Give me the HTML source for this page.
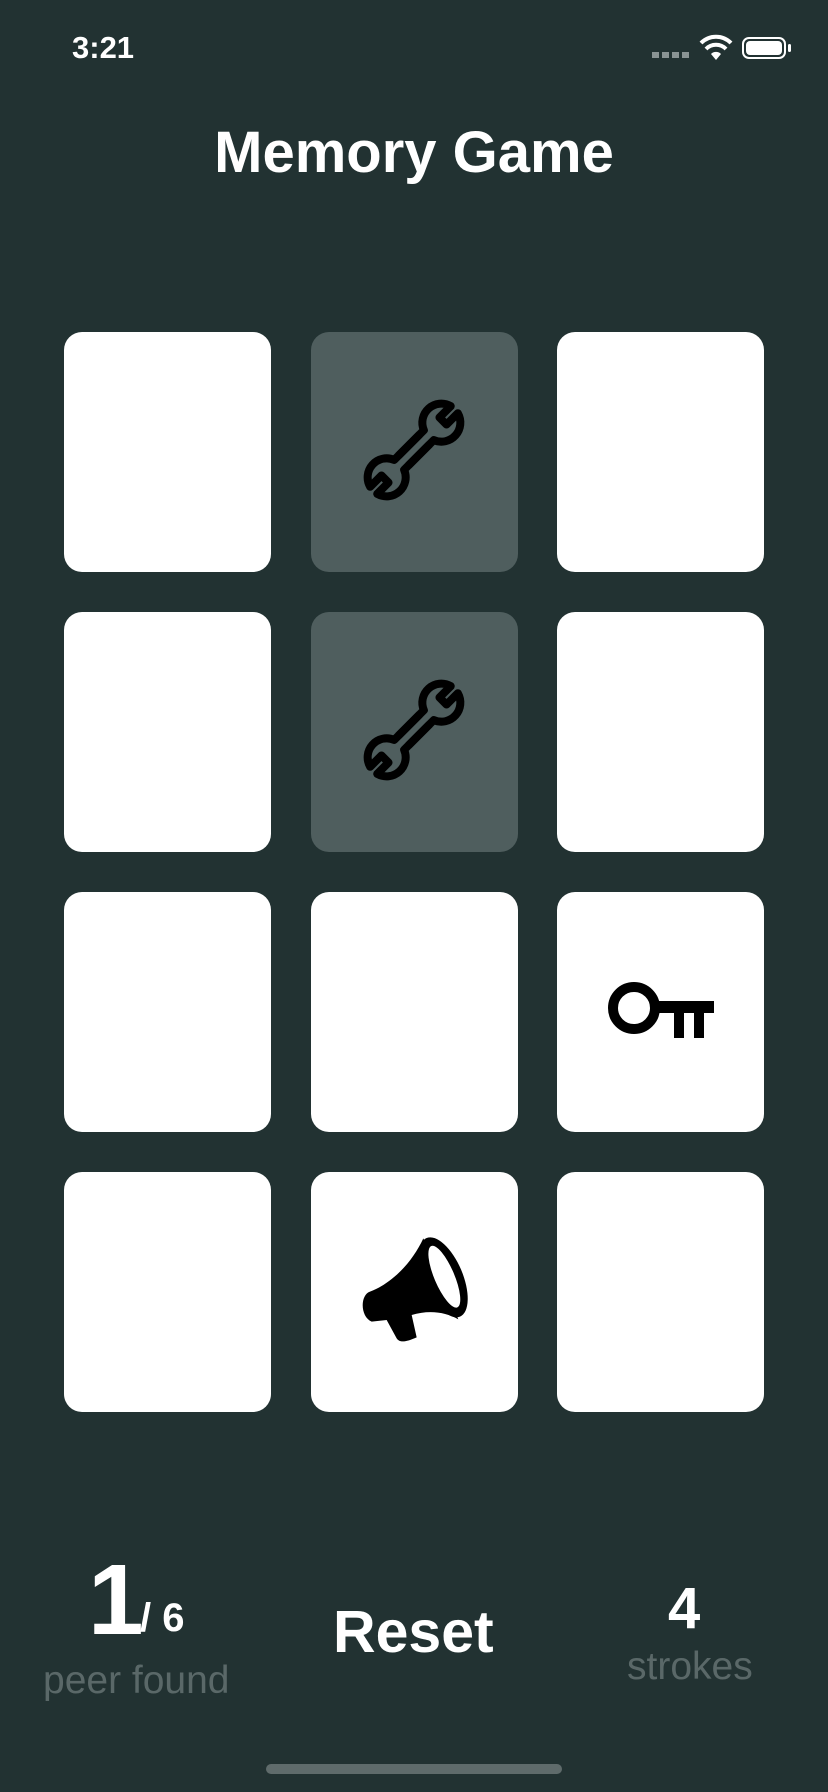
<!DOCTYPE html>
<html><head><meta charset="utf-8"><style>
html,body{margin:0;padding:0}
body{width:828px;height:1792px;background:#223232;position:relative;overflow:hidden;font-family:"Liberation Sans",sans-serif;color:#fff}
.c{position:absolute;width:207px;height:240px;border-radius:18px;background:#fff}
.f{background:#4f5e5e}
.t{position:absolute;white-space:nowrap}
svg{position:absolute;overflow:visible}
</style></head><body>
<div class="t" style="left:72px;top:30px;font-size:31px;font-weight:bold">3:21</div>
<div class="t" style="left:652px;top:52px;width:38px;height:6px;background:repeating-linear-gradient(90deg,#8a9494 0 7px,transparent 7px 10px)"></div>
<svg style="left:700px;top:36px" width="32" height="26" viewBox="0 0 32 26"><path d="M16 24 L11 18 A7 7 0 0 1 21 18Z" fill="#fff"/><path d="M6 13 A14 14 0 0 1 26 13" stroke="#fff" stroke-width="4" fill="none"/><path d="M1 7 A21 21 0 0 1 31 7" stroke="#fff" stroke-width="4" fill="none"/></svg>
<div class="t" style="left:742px;top:37px;width:44px;height:22px;border:2px solid #fff;border-radius:7px;box-sizing:border-box"><div style="position:absolute;left:2px;top:2px;right:2px;bottom:2px;background:#fff;border-radius:4px"></div></div>
<div class="t" style="left:788px;top:44px;width:3px;height:8px;background:#fff;border-radius:2px"></div>
<div class="t" style="left:0;width:828px;text-align:center;top:119px;font-size:58px;font-weight:bold">Memory Game</div>

<div class="c" style="left:64px;top:332px"></div>
<div class="c f" style="left:311px;top:332px"></div>
<div class="c" style="left:557px;top:332px"></div>
<div class="c" style="left:64px;top:612px"></div>
<div class="c f" style="left:311px;top:612px"></div>
<div class="c" style="left:557px;top:612px"></div>
<div class="c" style="left:64px;top:892px"></div>
<div class="c" style="left:311px;top:892px"></div>
<div class="c" style="left:557px;top:892px"></div>
<div class="c" style="left:64px;top:1172px"></div>
<div class="c" style="left:311px;top:1172px"></div>
<div class="c" style="left:557px;top:1172px"></div>

<svg style="left:361px;top:397px" width="106" height="106" viewBox="0 0 106 106"><g transform="rotate(-45 53 53)" fill="none" stroke="#000" stroke-width="8" stroke-linejoin="round"><path d="M38 46 L74 46 A19 19 0 0 1 110 48 L94 48 L94 58 L110 58 A19 19 0 0 1 74 60 L38 60"/><path d="M68 60 L32 60 A19 19 0 0 1 -4 58 L12 58 L12 48 L-4 48 A19 19 0 0 1 32 46 L68 46"/></g></svg>
<svg style="left:361px;top:677px" width="106" height="106" viewBox="0 0 106 106"><g transform="rotate(-45 53 53)" fill="none" stroke="#000" stroke-width="8" stroke-linejoin="round"><path d="M38 46 L74 46 A19 19 0 0 1 110 48 L94 48 L94 58 L110 58 A19 19 0 0 1 74 60 L38 60"/><path d="M68 60 L32 60 A19 19 0 0 1 -4 58 L12 58 L12 48 L-4 48 A19 19 0 0 1 32 46 L68 46"/></g></svg>
<svg style="left:608px;top:980px" width="106" height="60" viewBox="0 0 106 60"><circle cx="26" cy="28" r="21" fill="none" stroke="#000" stroke-width="10"/><rect x="46" y="21" width="60" height="12" fill="#000"/><rect x="66" y="28" width="10" height="30" fill="#000"/><rect x="86" y="28" width="10" height="30" fill="#000"/></svg>
<svg style="left:355px;top:1230px" width="120" height="120" viewBox="0 0 360 360"><path d="M205 25 C170 100 110 160 45 185 C15 195 15 260 50 275 L95 270 L125 325 C135 340 155 335 185 322 L170 255 C220 240 270 245 310 268 Z" fill="#000"/><ellipse cx="265" cy="142" rx="128" ry="58" transform="rotate(67 265 142)" fill="#000"/><ellipse cx="268" cy="140" rx="100" ry="30" transform="rotate(67 268 140)" fill="#fff"/></svg>

<div class="t" style="left:88px;top:1543px;font-size:100px;font-weight:bold">1</div>
<div class="t" style="left:140px;top:1596px;font-size:40px;font-weight:bold">/ 6</div>
<div class="t" style="left:43px;top:1659px;font-size:39px;color:#5a6868">peer found</div>
<div class="t" style="left:333px;top:1598px;font-size:59px;font-weight:bold">Reset</div>
<div class="t" style="left:668px;top:1575px;font-size:58px;font-weight:bold">4</div>
<div class="t" style="left:627px;top:1645px;font-size:39px;color:#5a6868">strokes</div>
<div class="t" style="left:266px;top:1764px;width:296px;height:10px;border-radius:5px;background:#5f6b6b"></div>
</body></html>
